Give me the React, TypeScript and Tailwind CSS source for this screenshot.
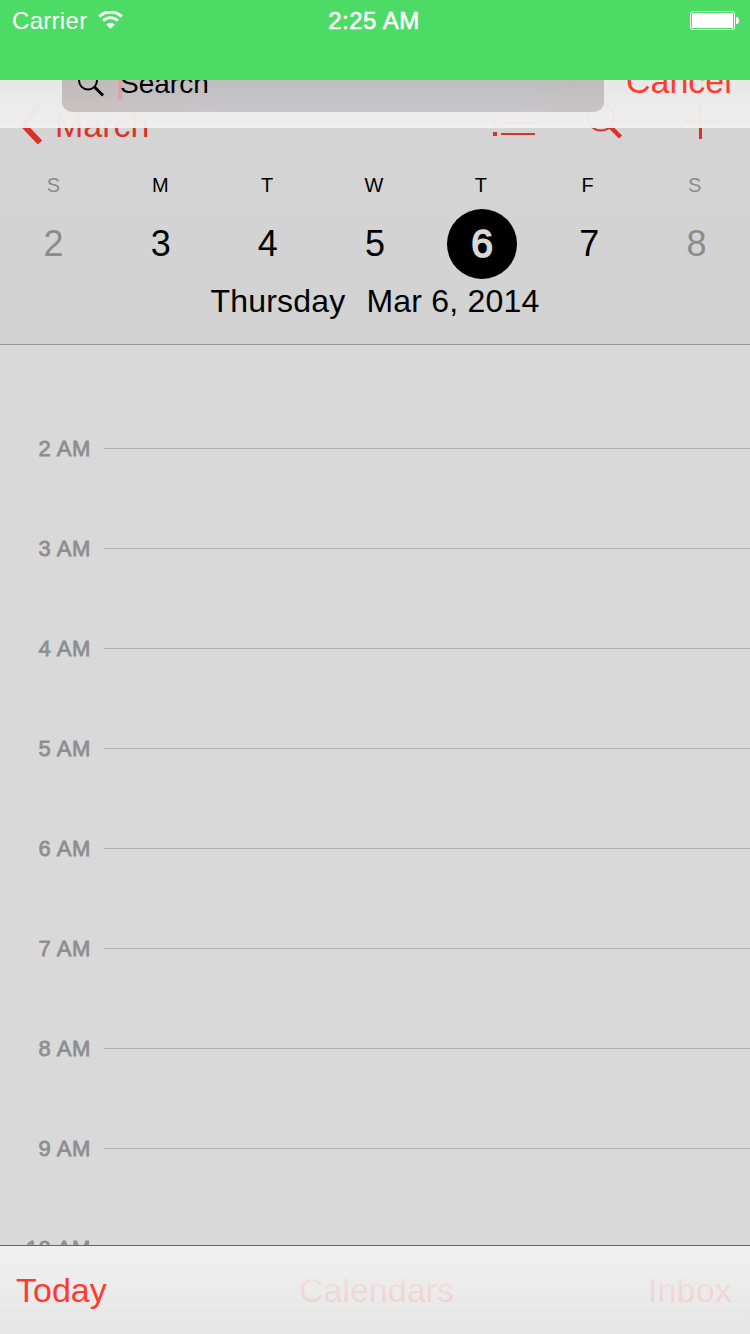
const weekdays = ["S", "M", "T", "W", "T", "F", "S"];
const dates = [2, 3, 4, 5, 6, 7, 8];
const hours = ["2 AM", "3 AM", "4 AM", "5 AM", "6 AM", "7 AM", "8 AM", "9 AM", "10 AM"];

function WifiIcon() {
  return (
    <svg className="ml-[11px] mt-[11px] h-[18px] w-[25px]" viewBox="0 0 25 18" fill="none">
      <path d="M1.2 5.6A16 16 0 0 1 23.8 5.6" stroke="white" strokeWidth="3" />
      <path d="M5 9.8A10.6 10.6 0 0 1 20 9.8" stroke="white" strokeWidth="2.8" />
      <path d="M8.2 13.4A6.1 6.1 0 0 1 16.8 13.4L12.5 17.8Z" fill="white" />
    </svg>
  );
}

function BatteryIcon() {
  return (
    <svg className="ml-auto mr-[11px] mt-[11px] h-[19px] w-[49px]" viewBox="0 0 49 19" fill="none">
      <rect x="0.5" y="0.5" width="44" height="18" rx="2.5" stroke="white" />
      <rect x="2" y="2" width="41" height="15" rx="1" fill="white" />
      <path d="M46 6H47C48.3 6 49 7.5 49 9.5S48.3 13 47 13H46Z" fill="white" />
    </svg>
  );
}

function StatusBar() {
  return (
    <header className="relative z-20 grid h-20 grid-cols-3 bg-[#4cdb64] text-2xl leading-[42px] text-white">
      <div className="flex pl-3">
        <span className="tracking-[0.3px]">Carrier</span>
        <WifiIcon />
      </div>
      <div className="pr-[2px] text-center tracking-[0.5px] [-webkit-text-stroke:0.6px_white]">2:25 AM</div>
      <div className="flex">
        <BatteryIcon />
      </div>
    </header>
  );
}

function SearchOverlay() {
  return (
    <div className="absolute left-0 top-20 z-10 flex h-12 w-[750px] overflow-hidden bg-linear-to-b from-[#e8e8e8]/96 to-[#f0f0f0]/96">
      <div className="ml-[62px] flex h-8 w-[542px] rounded-b-[10px] bg-[linear-gradient(to_right,#c9b4b466,#c9b4b400_35%,#c9b4b400_80%,#c9b4b444),linear-gradient(to_bottom,#bebec0,#c8c8ca)]">
        <svg className="ml-4 -mt-2 h-[26px] w-[27px]" viewBox="0 0 27 26" fill="none" stroke="black">
          <circle cx="10" cy="8.5" r="9" strokeWidth="2" />
          <path d="M16.5 15L25 23.5" strokeWidth="3" />
        </svg>
        <div className="ml-[13px] h-5 w-1 bg-[#d5a5a9]" />
        <span className="-ml-[2px] -mt-[16px] text-[28px] leading-[40px] text-black">Search</span>
      </div>
      <span className="-mt-[19px] ml-[22px] text-[34px] leading-[40px] text-[#ff3b30]">Cancel</span>
    </div>
  );
}

function NavRow() {
  return (
    <div className="flex h-[88px] text-[#d93329]">
      <svg className="ml-5 mt-6 h-[42px] w-[23px]" viewBox="0 0 23 42" fill="none">
        <path d="M20 1L3 20.5L20 38.5" stroke="currentColor" strokeWidth="6" />
      </svg>
      <span className="ml-3 mt-[25px] text-[34px] leading-[40px]">March</span>
      <svg className="ml-auto mt-6 h-[34px] w-[42px]" viewBox="0 0 42 34" fill="currentColor">
        <path d="M0 5H4V9H0ZM8 6H42V8H8ZM0 17H4V21H0ZM8 18H42V20H8ZM0 28H4V32H0ZM8 29H42V31H8Z" />
      </svg>
      <svg className="ml-[52px] mt-6 h-[36px] w-[36px]" viewBox="0 0 36 36" fill="none" stroke="currentColor">
        <circle cx="14" cy="13.5" r="13" strokeWidth="2" />
        <path d="M23 22.5L33.5 33" strokeWidth="4.5" />
      </svg>
      <svg className="ml-[60px] mr-8 mt-6 h-[36px] w-[35px]" viewBox="0 0 35 36" fill="currentColor">
        <path d="M16 0H19V35H16ZM0 16H35V19H0Z" />
      </svg>
    </div>
  );
}

function WeekHeader() {
  return (
    <section className="flex h-[265px] flex-col border-b border-[#969696] bg-linear-to-b from-[#d5d5d5] to-[#d2d2d2]">
      <NavRow />
      <div className="grid grid-cols-7 pr-[2px] text-center text-xl leading-[34px] text-black">
        {weekdays.map((day, i) => (
          <span key={i} className={i === 0 || i === 6 ? "text-[#8b8b8b]" : ""}>
            {day}
          </span>
        ))}
      </div>
      <div className="mt-[7px] grid grid-cols-7 text-center text-4xl leading-[70px] text-black">
        {dates.map((date, i) =>
          date === 6 ? (
            <span
              key={date}
              className="mx-auto size-[70px] rounded-full bg-black text-[39px] leading-[70px] text-[#d9d9d9] [-webkit-text-stroke:1.7px_#d9d9d9]"
            >
              6
            </span>
          ) : (
            <span key={date} className={i === 0 || i === 6 ? "text-[#8b8b8b]" : ""}>
              {date}
            </span>
          ),
        )}
      </div>
      <div className="flex justify-center gap-[21px] text-[32px] leading-[44px] tracking-[0.2px] text-black">
        <span>Thursday</span>
        <span>Mar 6, 2014</span>
      </div>
    </section>
  );
}

function DayTimeline() {
  return (
    <main className="h-[900px] overflow-hidden bg-[#d9d9d9] pt-[53px]">
      {hours.map((hour) => (
        <div key={hour} className="flex h-[100px] items-center">
          <span className="w-[91px] pt-px text-right text-[22px] leading-7 tracking-[0.6px] text-[#8e8e92] [-webkit-text-stroke:0.8px_#8e8e92]">
            {hour}
          </span>
          <div className="ml-[13px] h-px flex-1 bg-[#b2b2b4]" />
        </div>
      ))}
    </main>
  );
}

function Toolbar() {
  return (
    <footer className="flex h-[89px] justify-between border-t border-[#626466] bg-linear-to-b from-[#f0f0f0] to-[#e7e6e6] pl-4 pr-[18px] text-[34px] leading-[88px]">
      <span className="w-[100px] text-[#ff3b30]">Today</span>
      <span className="mr-[11px] bg-linear-to-b from-[#f0e6e4] from-25% to-[#f0d0ce] to-65% bg-clip-text text-transparent">Calendars</span>
      <span className="bg-linear-to-b from-[#f0e6e4] from-25% to-[#f0d0ce] to-65% bg-clip-text tracking-[0.2px] text-transparent">Inbox</span>
    </footer>
  );
}

export default function App() {
  return (
    <div className="relative h-[1334px] w-[750px] overflow-hidden bg-[#d9d9d9] font-['Liberation_Sans',Arial,sans-serif]">
      <StatusBar />
      <SearchOverlay />
      <WeekHeader />
      <DayTimeline />
      <Toolbar />
    </div>
  );
}
